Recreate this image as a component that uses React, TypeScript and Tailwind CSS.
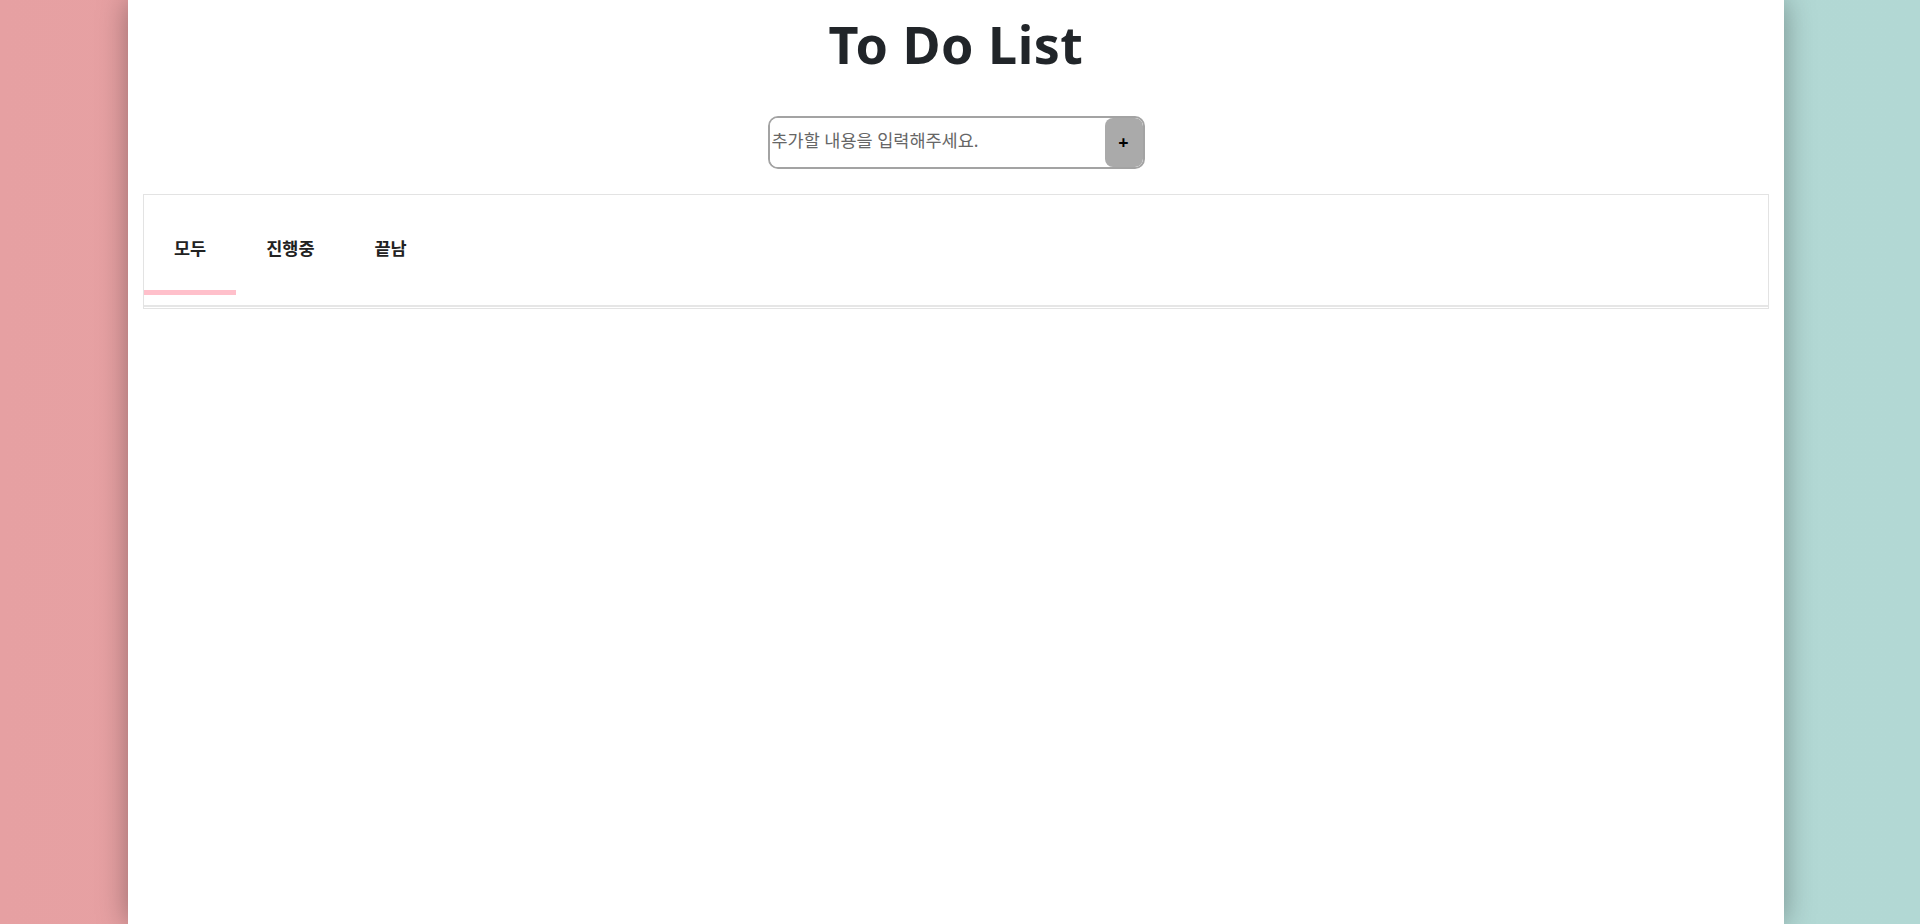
import { useState } from 'react';

const tabs = ['모두', '진행중', '끝남'];

export default function App() {
  const [active, setActive] = useState(0);
  const [text, setText] = useState('');

  return (
    <div className="relative min-h-[924px] w-full overflow-hidden bg-[linear-gradient(90deg,#e6a0a2_0%,#eaa6a8_50%,#b3d9d5_50%,#b2d8d4_100%)] font-['Noto_Sans','Noto_Sans_CJK_KR',sans-serif]">
      <div className="ml-[128px] flex min-h-[924px] w-[1656px] flex-col items-center bg-white px-[15px] shadow-[0_0_28px_rgba(0,0,0,0.35)]">
        <h1 className="mt-[12px] text-[52px] font-bold leading-[64px] tracking-[0.5px] text-[#212529]">
          To Do List
        </h1>

        <div className="mt-[40px] flex h-[53px] w-[377px] overflow-hidden rounded-[10px] border-2 border-[#a3a3a3]">
          <input
            value={text}
            onChange={(e) => setText(e.target.value)}
            placeholder="추가할 내용을 입력해주세요."
            className="min-w-0 flex-1 bg-white pb-[4px] pl-[2px] text-[17.5px] text-[#555] outline-none placeholder:text-[#666]"
          />
          <button className="w-[38px] rounded-[8px] bg-[#aaaaaa] text-[18px] font-bold text-black">+</button>
        </div>

        <div className="mt-[25px] w-full border border-[#e3e3e3] pb-[1px]">
          <div className="flex h-[112px] items-stretch border-b-2 border-[#e6e6e6]">
            {tabs.map((t, i) => (
              <button
                key={t}
                onClick={() => setActive(i)}
                className="relative flex items-center px-[30px] pb-[4px] pt-[2px] text-[17.5px] font-bold text-[#222]"
              >
                <span className="mt-[-1px]">{t}</span>
                {active === i && (
                  <span className="absolute bottom-[10px] left-0 h-[5px] w-full bg-[#ffc0cb]" />
                )}
              </button>
            ))}
          </div>
        </div>
      </div>
    </div>
  );
}
